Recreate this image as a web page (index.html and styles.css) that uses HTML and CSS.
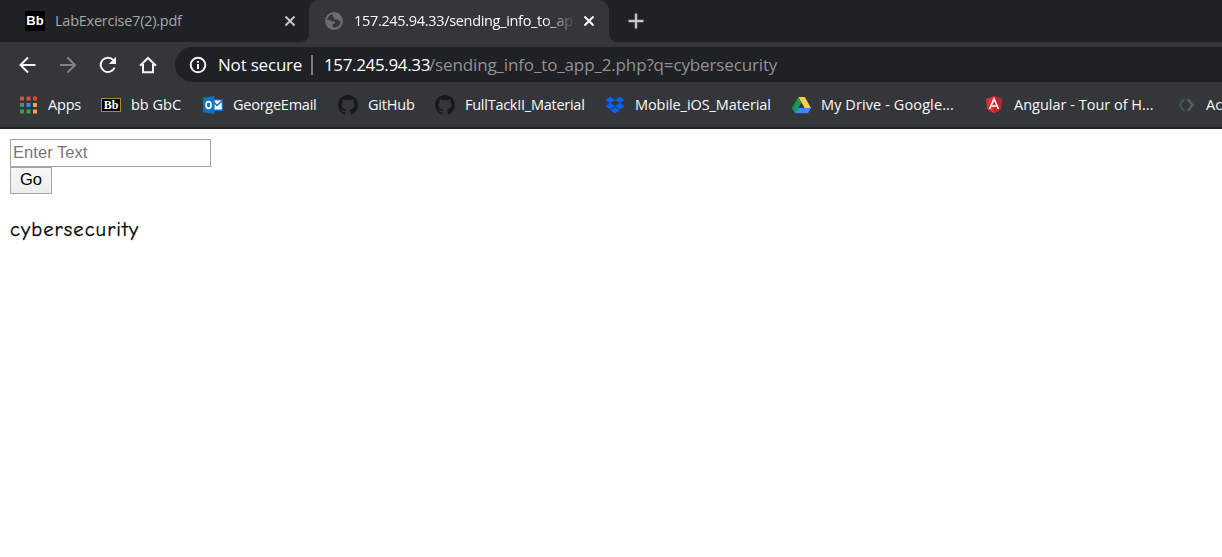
FILE: index.html
```html
<!DOCTYPE html>
<html lang="en">
<head>
<meta charset="utf-8">
<title>157.245.94.33/sending_info_to_app_2.php</title>
<link rel="stylesheet" href="styles.css">
</head>
<body>
<svg class="defs" width="0" height="0">
  <symbol id="octocat" viewBox="0 0 16 16"><path d="M8 0C3.58 0 0 3.58 0 8c0 3.54 2.29 6.53 5.47 7.59.4.07.55-.17.55-.38v-1.49c-2.01.37-2.53-.49-2.69-.94-.09-.23-.48-.94-.82-1.13-.28-.15-.68-.52-.01-.53.63-.01 1.08.58 1.23.82.72 1.21 1.87.87 2.33.66.07-.52.28-.87.51-1.07-1.78-.2-3.64-.89-3.64-3.95 0-.87.31-1.59.82-2.15-.08-.2-.36-1.02.08-2.12 0 0 .67-.21 2.2.82a7.6 7.6 0 0 1 4 0c1.53-1.04 2.2-.82 2.2-.82.44 1.1.16 1.92.08 2.12.51.56.82 1.27.82 2.15 0 3.07-1.87 3.75-3.65 3.95.29.25.54.73.54 1.48v2.2c0 .21.15.46.55.38A8 8 0 0 0 16 8c0-4.42-3.58-8-8-8z"/></symbol>
</svg>
<header class="browser">
  <div class="tabs">
    <div class="tab">
      <span class="bb-favicon">Bb</span>
      <span class="tab-title t-pdf">LabExercise7(2).pdf</span>
      <svg class="close" width="12" height="12" viewBox="0 0 12 12"><path d="M1.5 1.5l9 9m0-9l-9 9"/></svg>
    </div>
    <div class="tab active">
      <svg class="globe" width="18" height="18" viewBox="0 0 18 18"><circle cx="9" cy="9" r="9"/><path d="M8 2.2C5 2.5 2.5 5 2.2 8l3.3.2 1.5 1.2h3v2.2H7.8v3.8c4 .9 7.8-2 7.9-6.2l-1.8-.2-1.3-1.4H10L8.700 6.200V4.700H7.500z"/></svg>
      <span class="tab-title t-url">157.245.94.33/sending_info_to_ap</span>
      <svg class="close" width="12" height="12" viewBox="0 0 12 12"><path d="M1.5 1.5l9 9m0-9l-9 9"/></svg>
    </div>
    <svg class="plus" width="16" height="16" viewBox="0 0 16 16"><path d="M8 .5v15M.5 8h15"/></svg>
  </div>
  <div class="toolbar">
    <svg class="nav" width="20" height="20" viewBox="0 0 20 20"><path d="M17.500 10H3M10 2.500L2.500 10l7.500 7.500"/></svg>
    <svg class="nav dim" width="20" height="20" viewBox="0 0 20 20"><path d="M2 10h14.500M9.500 2.500L17 10l-7.500 7.500"/></svg>
    <svg class="nav" width="20" height="20" viewBox="0 0 20 20"><path d="M16.600 12.500A7.200 7.200 0 1 1 15.500 5.300L17 7"/><path class="solid" d="M18 1.800V9h-7.200z"/></svg>
    <svg class="nav home" width="20" height="20" viewBox="0 0 20 20"><path d="M2 10.800L10 3l8 7.800M5 9v8.200h10V9"/></svg>
    <div class="omnibox">
      <svg class="info" width="18" height="18" viewBox="0 0 18 18"><circle cx="9" cy="9" r="7.300"/><path d="M9 8v5M9 5v1.800"/></svg>
      <span class="secure">Not secure</span>
      <span class="divider"></span>
      <span class="host">157.245.94.33</span><span class="path">/sending_info_to_app_2.php?q=cybersecurity</span>
    </div>
  </div>
  <nav class="bookmarks">
    <a class="bm apps"><svg width="18" height="20" viewBox="0 0 18 20"><path fill="#e8453c" d="M0 1.500h4v4H0zM6.500 1.500h4v4h-4zM13 1.500h4v4h-4z"/><path fill="#35a35a" d="M0 8h4v4H0zM0 14.500h4v4H0zM6.500 14.500h4v4h-4z"/><path fill="#2f8be6" d="M6.500 8h4v4h-4z"/><path fill="#f4a72c" d="M13 8h4v4h-4zM13 14.500h4v4h-4z"/></svg><span>Apps</span></a>
    <a class="bm gbc"><i class="bb-badge">Bb</i><span>bb GbC</span></a>
    <a class="bm mail"><svg width="20" height="20" viewBox="0 0 20 20"><path fill="#fff" d="M10 5h9v10h-9z"/><path fill="#0b72c6" d="M0 2.500L11.500 1v18L0 17.300z"/><path fill="none" stroke="#0b72c6" stroke-width="1.600" d="M11 7.500l3 3L19 6M11.500 4.700h8v10.600h-8"/><ellipse cx="5.600" cy="10" rx="2.500" ry="3.300" fill="none" stroke="#fff" stroke-width="1.700"/></svg><span>GeorgeEmail</span></a>
    <a class="bm hub"><svg class="cat" width="20" height="20"><use href="#octocat"/></svg><span>GitHub</span></a>
    <a class="bm full"><svg class="cat" width="20" height="20"><use href="#octocat"/></svg><span>FullTackII_Material</span></a>
    <a class="bm ios"><svg width="20" height="20" viewBox="0 0 20 20"><path fill="#0b63f6" d="M5.200 1.800L10 4.900 5.200 8 .4 4.900zM14.800 1.800l4.800 3.100L14.800 8 10 4.900zM5.200 8L10 11.100l-4.800 3.100-4.800-3.100zM14.800 8l4.800 3.100-4.800 3.100-4.800-3.100zM10 12.200l4.800 3.100-4.800 3.100-4.800-3.100z"/></svg><span>Mobile_iOS_Material</span></a>
    <a class="bm drive"><svg width="19" height="20" viewBox="0 0 19 20"><path fill="#0f9d58" d="M6.500 2L0 13l3 5.200L9.700 7.300z"/><path fill="#ffcf48" d="M6.500 2h6.300L19 13h-6.300z"/><path fill="#4285f4" d="M6 13h13l-3 5.200H3z"/></svg><span>My Drive - Google...</span></a>
    <a class="bm ng"><svg width="19" height="20" viewBox="0 0 19 20"><path fill="#dd3037" d="M9 1l8 2.900-1.200 10.500L9 18.300l-6.800-3.900L1 3.900z"/><path fill="#bd252e" d="M9 1l8 2.900-1.200 10.500L9 18.300z"/><path fill="none" stroke="#fff" stroke-width="1.700" d="M4.500 14L9 4l4.500 10M6.500 11h5"/></svg><span>Angular - Tour of H...</span></a>
    <a class="bm ac"><svg width="18" height="20" viewBox="0 0 18 20"><path fill="none" stroke="#3e525c" stroke-width="2.300" d="M6.500 4.500C4 5 3.500 8.500 1.500 10c2 1.500 2.500 5 5 5.500"/><path fill="none" stroke="#4c626c" stroke-width="2.300" d="M9.500 4.500c2.500.5 3 4 5 5.500-2 1.500-2.500 5-5 5.500"/></svg><span>Ac</span></a>
  </nav>
</header>
<main class="page">
  <form class="form">
    <input class="field" type="text" placeholder="Enter Text">
    <button class="go" type="button">Go</button>
  </form>
  <p class="result">cybersecurity</p>
</main>
</body>
</html>
```
FILE: styles.css
```css
* { box-sizing: border-box; }
body { margin: 0; height: 557px; overflow: hidden; background: #fff; font-family: "Segoe UI", "Open Sans", "Noto Sans", sans-serif; }
svg { display: block; flex: none; }
.defs { position: absolute; }
.browser { width: 1222px; height: 129px; overflow: hidden; background: #35363a; border-bottom: 2px solid #202124; color: #f8f9fa; }
.tabs { display: flex; height: 42px; background: #202124; }
.tab { display: flex; align-items: center; width: 309px; padding: 0 13px 0 25px; color: #a3a6aa; font-size: 14.5px; }
.tab-title { flex: none; white-space: nowrap; line-height: 24px; }
.t-pdf { width: 222px; margin-left: 10px; letter-spacing: -0.25px; }
.t-url { width: 219px; margin-left: 11px; letter-spacing: -0.32px; color: #f8f9fa; -webkit-mask-image: linear-gradient(90deg, #000 190px, transparent 222px); mask-image: linear-gradient(90deg, #000 190px, transparent 222px); }
.tab .close { margin-left: 7px; }
.close, .plus { fill: none; stroke: #c4c7ca; stroke-width: 2; }
.bb-favicon { width: 20px; height: 20px; background: #000; color: #fff; font: bold 13px/20px "Liberation Sans", sans-serif; text-align: center; }
.tab.active { position: relative; width: 300px; padding: 0 15px 0 16px; background: #35363a; border-radius: 10px 10px 0 0; }
.tab.active .close { stroke: #fff; margin-left: 10px; }
.tab.active::before, .tab.active::after { content: ""; position: absolute; bottom: 0; width: 8px; height: 8px; }
.tab.active::before { left: -8px; background: radial-gradient(circle at 0 0, transparent 7.5px, #35363a 8px); }
.tab.active::after { right: -8px; background: radial-gradient(circle at 100% 0, transparent 7.5px, #35363a 8px); }
.globe circle { fill: #6b6d71; }
.globe path { fill: #35363a; }
.plus { align-self: center; margin-left: 19px; stroke-width: 2.4; }
.toolbar { display: flex; align-items: center; height: 45px; padding-left: 18px; }
.nav { margin-right: 20px; fill: none; stroke: #f1f3f4; stroke-width: 2; }
.nav.dim { stroke: #818387; }
.nav.home { margin-right: 17px; }
.nav .solid { fill: #f1f3f4; stroke: none; }
.omnibox { display: flex; align-items: center; flex: 1; height: 35px; padding-left: 14px; background: #202124; border-radius: 18px 0 0 18px; font-size: 17px; white-space: nowrap; }
.info { fill: none; stroke: #f1f3f4; stroke-width: 2; }
.secure { width: 84px; margin-left: 11px; letter-spacing: -0.2px; }
.divider { width: 2px; height: 20px; margin: 0 11px 0 9px; background: #797b7e; }
.host { width: 105px; color: #fff; letter-spacing: -0.35px; }
.path { color: #909296; letter-spacing: -0.14px; }
.bookmarks { display: grid; grid-template-columns: 81px 102px 135px 97px 170px 187px 193px 193px 120px; width: 1300px; height: 35px; padding-left: 20px; font-size: 14.5px; }
.bm { display: flex; align-items: center; gap: 10px; white-space: nowrap; }
.bm span { padding-bottom: 1px; }
.apps span { letter-spacing: -0.2px; }
.mail span { letter-spacing: -0.25px; }
.hub span { letter-spacing: -0.2px; }
.full span { letter-spacing: -0.26px; }
.ios span { letter-spacing: -0.08px; }
.drive span { letter-spacing: 0.1px; }
.bb-badge { width: 20px; height: 14px; flex: none; background: #000; border: 1px solid #a98b3a; color: #fff; font: bold 12px/12px "Liberation Serif", serif; text-align: center; }
.cat { fill: #17181b; }
.page { padding: 10px; }
.form { display: flex; flex-direction: column; align-items: flex-start; }
.field { width: 201px; height: 28px; padding: 2px 1px 2px 2px; border: 1px solid #a5a5a5; border-radius: 0; font: 16.6px "Liberation Sans", sans-serif; }
.field::placeholder { color: #777; }
.go { width: 42px; height: 27px; padding: 0 0 2px; border: 1px solid #a5a5a5; border-radius: 0; background: linear-gradient(#f7f7f7, #ededed); color: #000; font: 16.5px "Liberation Sans", sans-serif; }
.result { margin: 22px 0 0; color: #000; font: 20.5px/28px "Comic Sans MS", "Comic Neue", Lato, sans-serif; letter-spacing: 1.07px; -webkit-text-stroke: 0.25px #000; }
```
